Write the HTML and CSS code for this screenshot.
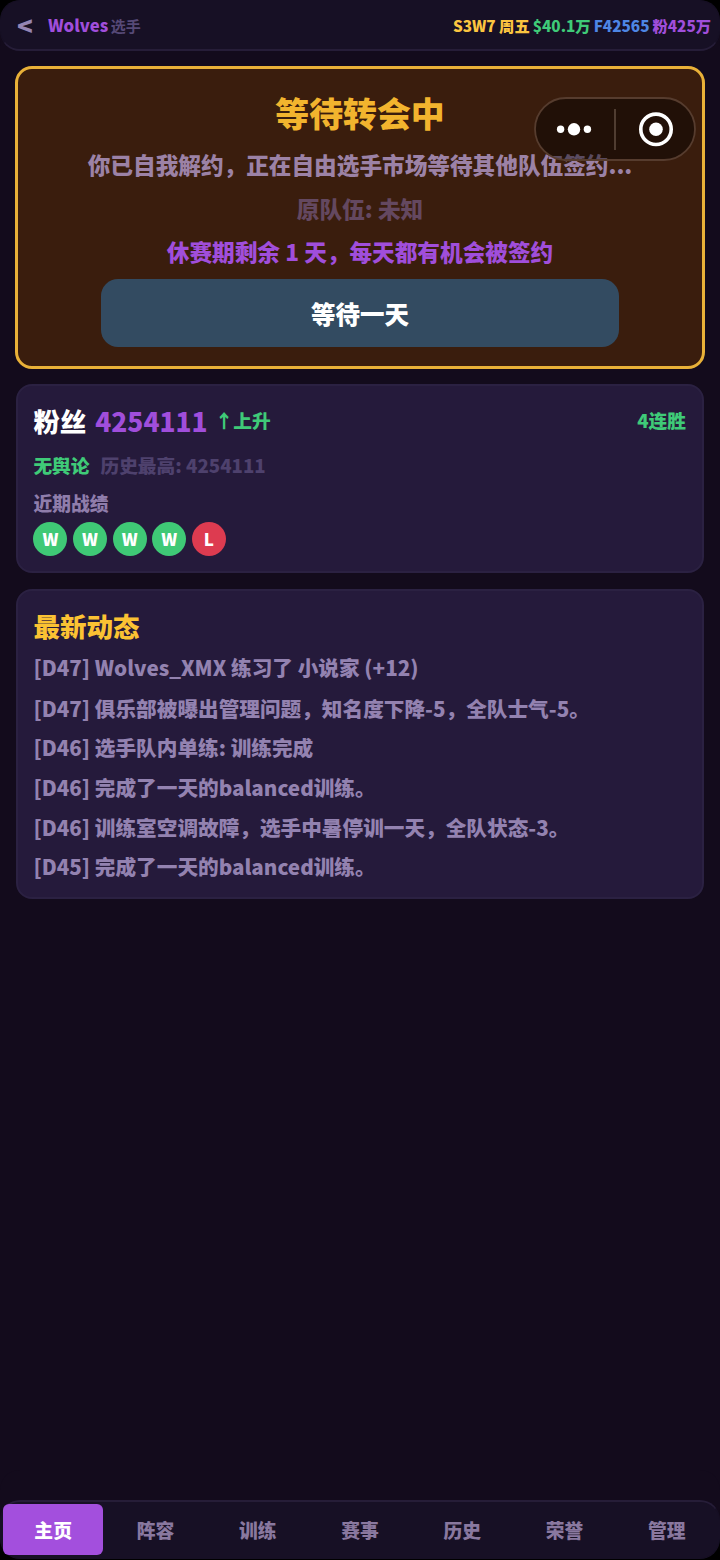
FILE: index.html
```
<!DOCTYPE html>
<html lang="zh-CN">
<head>
<meta charset="utf-8">
<title>Wolves</title>
<link rel="stylesheet" href="styles.css">
</head>
<body>
<div class="app">
  <header class="topbar">
    <span class="back">&lt;</span>
    <span class="team">Wolves</span>
    <span class="role">选手</span>
    <div class="stats">
      <span class="gold">S3W7 周五</span>
      <span class="green">$40.1万</span>
      <span class="blue">F42565</span>
      <span class="purple">粉425万</span>
    </div>
  </header>
  <main class="content">
    <section class="hero">
      <h1 class="hero-title">等待转会中</h1>
      <p class="hero-desc">你已自我解约，正在自由选手市场等待其他队伍签约...</p>
      <p class="hero-old">原队伍: 未知</p>
      <p class="hero-left">休赛期剩余 1 天，每天都有机会被签约</p>
      <button class="wait">等待一天</button>
    </section>
    <section class="card fans">
      <div class="fans-row">
        <span class="fans-label">粉丝</span>
        <span class="fans-count">4254111</span>
        <span class="trend">↑上升</span>
        <span class="streak">4连胜</span>
      </div>
      <div class="opinion"><span class="green">无舆论</span><span class="peak">历史最高: 4254111</span></div>
      <div class="recent">近期战绩</div>
      <div class="results">
        <span class="dot">W</span><span class="dot">W</span><span class="dot">W</span><span class="dot">W</span><span class="dot loss">L</span>
      </div>
    </section>
    <section class="card news">
      <h2 class="news-title">最新动态</h2>
      <ul class="news-list">
        <li>[D47] Wolves_XMX 练习了 小说家 (+12)</li>
        <li>[D47] 俱乐部被曝出管理问题，知名度下降-5，全队士气-5。</li>
        <li>[D46] 选手队内单练: 训练完成</li>
        <li>[D46] 完成了一天的balanced训练。</li>
        <li>[D46] 训练室空调故障，选手中暑停训一天，全队状态-3。</li>
        <li>[D45] 完成了一天的balanced训练。</li>
      </ul>
    </section>
  </main>
  <nav class="tabs">
    <a class="tab active">主页</a><a class="tab">阵容</a><a class="tab">训练</a><a class="tab">赛事</a><a class="tab">历史</a><a class="tab">荣誉</a><a class="tab">管理</a>
  </nav>
  <svg class="capsule" width="162" height="64" viewBox="0 0 162 64">
    <rect x="1" y="1" width="160" height="62" rx="31" fill="#000" fill-opacity=".42" stroke="#563c2e" stroke-width="1.8"/>
    <circle cx="26.6" cy="32.3" r="3.7" fill="#fff"/>
    <circle cx="40" cy="32.3" r="6.2" fill="#fff"/>
    <circle cx="53.4" cy="32.3" r="3.7" fill="#fff"/>
    <path d="M81 12v41" stroke="#5d493d" stroke-width="1.6"/>
    <circle cx="122" cy="32.3" r="15.2" fill="none" stroke="#fff" stroke-width="3.6"/>
    <circle cx="122" cy="32.3" r="6.8" fill="#fff"/>
  </svg>
</div>
</body>
</html>
```
FILE: styles.css
```
* { box-sizing: border-box; margin: 0; padding: 0; }
body {
  background: #000;
  font-family: "Noto Sans CJK SC", sans-serif;
  font-weight: 900;
  color: #fff;
}
.app {
  position: relative;
  display: flex;
  flex-direction: column;
  height: 1560px;
  padding-bottom: 1px;
  background: linear-gradient(#000 0 25px, #130b1c 25px 1530px, #000 1530px);
  overflow: hidden;
  white-space: nowrap;
}
.gold { color: #fbc540; }
.green { color: #3fca78; }
.blue { color: #4e86e4; }
.purple { color: #a04edb; }

.topbar {
  display: flex;
  align-items: center;
  height: 51px;
  padding: 0 8px 0 16px;
  background: #171025;
  border: 1px solid #171025;
  border-bottom: 2px solid #261d38;
  border-radius: 20px;
  box-shadow: 0 26px 0 #130b1c;
}
.back { width: 31px; font-size: 26px; line-height: 40px; color: #9585b4; }
.team { font-size: 16.7px; color: #a04edb; }
.role { margin-left: 2.5px; font-size: 15px; font-weight: 700; color: #564977; }
.stats { display: flex; gap: 3px; margin-left: auto; font-size: 15.3px; }

.content {
  flex: 1;
  display: flex;
  flex-direction: column;
  gap: 16px;
  padding: 15px 15px 0;
  background: #130b1c;
}
.hero {
  display: flex;
  flex-direction: column;
  align-items: center;
  height: 303px;
  padding-top: 19px;
  background: #3a1d0d;
  border: 3px solid #e9b138;
  border-radius: 17px;
  font-size: 22.65px;
}
.hero-title { margin-bottom: 5px; font-size: 33.9px; font-weight: 900; line-height: 50px; color: #f2b42e; }
.hero-desc { line-height: 44px; color: #9c82a6; }
.hero-old { line-height: 44px; color: #644860; }
.hero-left { margin-bottom: 6px; line-height: 42px; color: #a04edb; }
.wait {
  width: 518px;
  height: 68px;
  background: #334b61;
  border: 0;
  border-radius: 17px;
  color: #fff;
  font: 900 24.5px "Noto Sans CJK SC", sans-serif;
}
.card {
  margin: -1px 1px 0;
  padding: 0 16px 0 15.4px;
  background: #251a3b;
  border: 2px solid #2b2142;
  border-radius: 16px;
}
.fans { height: 189px; padding-top: 12px; }
.fans + .news { margin-top: 0; }
.fans-row { display: flex; align-items: center; height: 44px; }
.fans-label { margin-right: 9px; font-size: 26.4px; }
.fans-count { margin-right: 7px; font-size: 26.4px; color: #a04edb; }
.trend, .streak { padding-bottom: 1px; font-size: 18.7px; color: #3fca78; }
.streak { margin-left: auto; }
.opinion { display: flex; gap: 11px; font-size: 18.7px; line-height: 45px; }
.peak { color: #4e416d; }
.recent { margin-bottom: 3px; font-size: 18.8px; line-height: 32px; color: #8f7dab; }
.results { display: flex; gap: 5.6px; }
.dot {
  width: 34px;
  height: 34px;
  border-radius: 50%;
  background: #3fc976;
  font-size: 17px;
  line-height: 33px;
  text-align: center;
}
.loss { background: #dd3b50; }
.news { height: 310px; padding-top: 15px; }
.news-title { font-size: 26.5px; font-weight: 900; line-height: 40px; color: #fbc233; }
.news-list { list-style: none; font-size: 20.65px; line-height: 39.6px; color: #9382b0; }
.news-list li:first-child { margin-bottom: 0.8px; line-height: 42px; }

.tabs {
  display: grid;
  grid-template-columns: repeat(7, 1fr);
  gap: 2px;
  height: 59px;
  padding: 2px 2px 3px;
  background: #171025;
  border: 1px solid #171025;
  border-top: 2px solid #261d38;
  border-radius: 20px;
  box-shadow: 0 -30px 0 #130b1c;
}
.tab {
  display: flex;
  align-items: center;
  justify-content: center;
  border-radius: 6px;
  font-size: 18.8px;
  color: #89789f;
}
.active { background: #a34fdd; color: #fff; }
.capsule { position: absolute; left: 534px; top: 97px; }
```
